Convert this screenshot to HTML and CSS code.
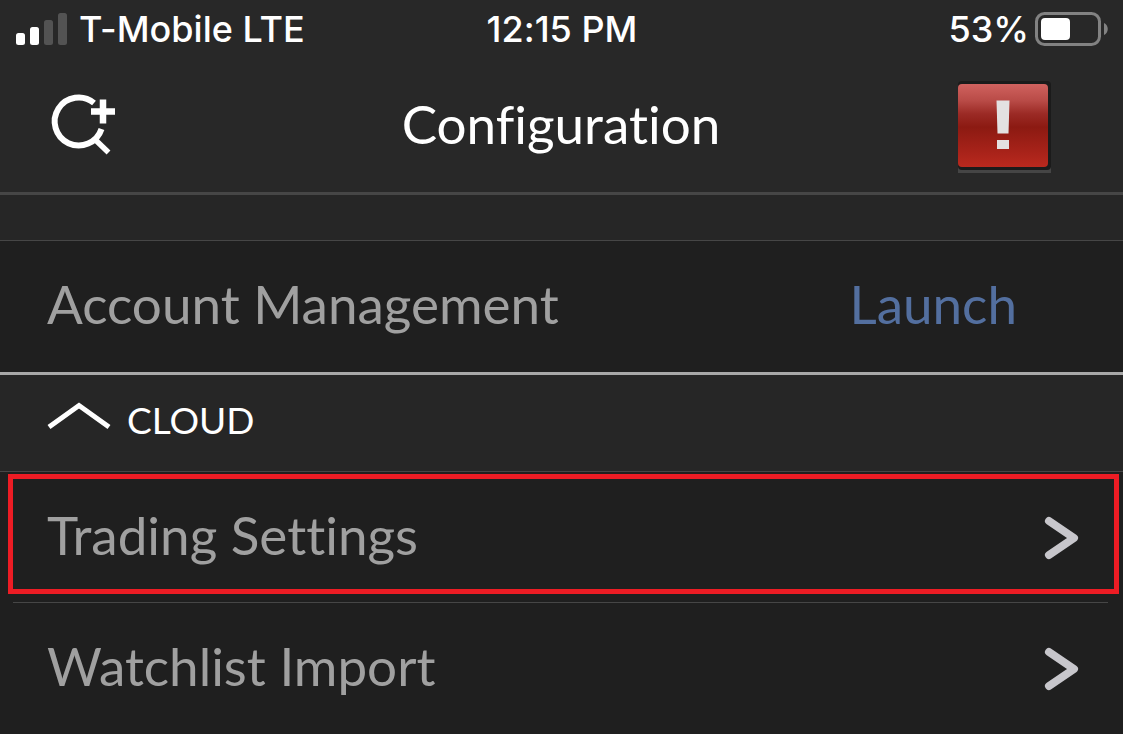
FILE: index.html
```html
<!DOCTYPE html>
<html lang="en">
<head>
  <meta charset="UTF-8">
  <meta name="viewport" content="width=device-width, initial-scale=1">
  <title>Configuration</title>
  <link rel="stylesheet" href="styles.css">
</head>
<body>
  <div class="status-bar">
    <div class="status-left">
      <svg class="signal" width="51" height="32" viewBox="0 0 51 32" aria-hidden="true">
        <rect x="0" y="20" width="9" height="12" rx="2.5" fill="#fff"/>
        <rect x="14" y="14" width="9" height="18" rx="2.5" fill="#fff"/>
        <rect x="28" y="7" width="9" height="25" rx="2.5" fill="#535353"/>
        <rect x="42" y="0" width="9" height="32" rx="2.5" fill="#535353"/>
      </svg>
      <span>T-Mobile LTE</span>
    </div>
    <div class="status-time">12:15 PM</div>
    <div class="status-right">
      <span>53%</span>
      <svg class="battery" width="73" height="34" viewBox="0 0 73 34" aria-hidden="true">
        <rect x="1.5" y="1.5" width="63" height="31" rx="8" fill="none" stroke="#828282" stroke-width="3"/>
        <rect x="6" y="6" width="29" height="22" rx="4" fill="#fff"/>
        <path d="M69 11c5 2 5 10 0 12z" fill="#828282"/>
      </svg>
    </div>
  </div>

  <header class="nav-bar">
    <button class="icon-button" aria-label="Add symbol">
      <svg width="64" height="62" viewBox="0 0 64 62">
        <path d="M42 8A24 24 0 1 0 49.500 34" fill="none" stroke="#fff" stroke-width="6"/>
        <path d="M43 44.500L56.500 57.500" fill="none" stroke="#fff" stroke-width="5.500"/>
        <path d="M39 16.500h24M51 4.500v24" fill="none" stroke="#fff" stroke-width="6.500"/>
      </svg>
    </button>
    <h1>Configuration</h1>
    <button class="icon-button" aria-label="Alerts">
      <svg width="94" height="94" viewBox="0 0 94 94">
        <defs>
          <linearGradient id="red" x1="0" y1="0" x2="0" y2="1">
            <stop offset="0" stop-color="#d0625f"/>
            <stop offset="0.2" stop-color="#b94b47"/>
            <stop offset="0.36" stop-color="#9b2a25"/>
            <stop offset="0.52" stop-color="#8c1a12"/>
            <stop offset="0.8" stop-color="#a62219"/>
            <stop offset="1" stop-color="#b9291e"/>
          </linearGradient>
        </defs>
        <rect x="0" y="88" width="93" height="6" fill="#454545"/>
        <rect x="0" y="2" width="93" height="89" rx="4" fill="#1b1b1b"/>
        <rect x="0" y="5" width="90" height="83" rx="4" fill="url(#red)"/>
        <path d="M38.500 21.500h13l-1 33h-11z" fill="#e3e1e1"/>
        <rect x="39" y="61" width="12" height="9" fill="#e3e1e1"/>
      </svg>
    </button>
  </header>

  <main>
    <div class="spacer"></div>

    <div class="row">
      <span class="label">Account Management</span>
      <a href="#" class="label launch">Launch</a>
    </div>

    <button class="section" aria-expanded="true">
      <svg width="64" height="34" viewBox="0 0 64 34" aria-hidden="true">
        <path d="M2 25L32 3.500L62 25" fill="none" stroke="#fff" stroke-width="5"/>
      </svg>
      <span>CLOUD</span>
    </button>

    <a href="#" class="row highlighted">
      <span class="label">Trading Settings</span>
      <svg class="chevron" width="34" height="42" viewBox="0 0 34 42" aria-hidden="true">
        <path d="M4 4L29 21L4 38" fill="none" stroke="#c7c6cb" stroke-width="8" stroke-linecap="round" stroke-linejoin="round"/>
      </svg>
    </a>
    <hr class="divider">
    <a href="#" class="row">
      <span class="label">Watchlist Import</span>
      <svg class="chevron" width="34" height="42" viewBox="0 0 34 42" aria-hidden="true">
        <path d="M4 4L29 21L4 38" fill="none" stroke="#c7c6cb" stroke-width="8" stroke-linecap="round" stroke-linejoin="round"/>
      </svg>
    </a>
  </main>
</body>
</html>
```
FILE: styles.css
```css
* {
  box-sizing: border-box;
}
body {
  margin: 0;
  background-color: #1f1f1f;
  color: #a0a0a0;
  font-family: 'Lato', sans-serif;
  font-size: 53px;
  font-variant-ligatures: none;
  line-height: 60px;
}
button {
  background: none;
  border: none;
  padding: 0;
  color: #fff;
  font-family: inherit;
  cursor: pointer;
}
a {
  color: inherit;
  text-decoration: none;
}
svg {
  display: block;
  overflow: visible;
}

/* status bar */
.status-bar {
  display: grid;
  grid-template-columns: 1fr auto 1fr;
  align-items: center;
  height: 60px;
  padding: 0 15px 2px 16px;
  background-color: #282828;
  color: #fff;
  font-family: 'Inter', sans-serif;
  font-size: 36px;
  font-weight: 500;
  line-height: 58px;
}
.status-left,
.status-right {
  display: flex;
  align-items: center;
  gap: 12px;
}
.status-right {
  justify-content: flex-end;
  gap: 6px;
}

/* title bar */
.nav-bar {
  display: grid;
  grid-template-columns: 1fr auto 1fr;
  align-items: center;
  height: 135px;
  padding: 0 71px 0 52px;
  background-color: #282828;
  border-bottom: 3px solid #464646;
}
.nav-bar h1 {
  margin: 0;
  padding: 0 0 4px 18px;
  color: #fff;
  font-size: 53px;
  font-weight: 400;
}
.icon-button {
  justify-self: start;
}
.icon-button:last-child {
  justify-self: end;
}

/* list */
.spacer {
  height: 46px;
  background-color: #262626;
  border-bottom: 1px solid #464646;
}
.row {
  position: relative;
  display: flex;
  align-items: center;
  justify-content: space-between;
  height: 131px;
  padding: 0 44px 0 47px;
}
.label {
  padding-bottom: 6px;
}
.launch {
  margin-right: 62px;
  color: #536f9f;
}
.section {
  display: flex;
  align-items: center;
  gap: 16px;
  width: 100%;
  height: 100px;
  padding: 0 47px 8px;
  background-color: #262626;
  border-top: 3px solid #a8a8a8;
  border-bottom: 1px solid #464646;
  font-size: 37px;
}
.divider {
  height: 1px;
  margin: -1px 15px 0 13px;
  border: none;
  background-color: #464646;
}
.highlighted::after {
  content: '';
  position: absolute;
  top: 2px;
  right: 4px;
  bottom: 9px;
  left: 8px;
  border: 5px solid #ed1c24;
}
```
